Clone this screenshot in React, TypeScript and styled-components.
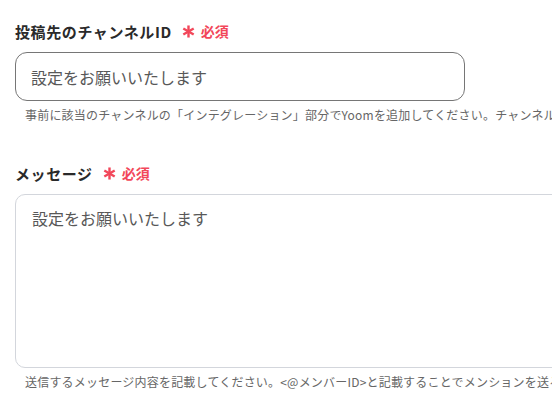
import styled, { createGlobalStyle } from "styled-components";

const GlobalStyle = createGlobalStyle`
  html, body {
    margin: 0;
    padding: 0;
    background: #ffffff;
    overflow: hidden;
  }
  body {
    font-family: "Noto Sans CJK JP", "Noto Sans", sans-serif;
    color: #2b2b2b;
  }
`;

const Page = styled.div`
  display: flex;
  flex-direction: column;
  gap: 38px;
  padding: 20px 0 0 15px;
  width: 700px;
`;

const Field = styled.div`
  display: flex;
  flex-direction: column;
`;

const LabelRow = styled.div`
  display: flex;
  align-items: center;
  height: 22px;
  margin-bottom: 10px;
`;

const Label = styled.span`
  font-size: 15px;
  font-weight: 700;
  color: #2a2a2a;
  letter-spacing: 0.6px;
`;

const Required = styled.span`
  display: flex;
  align-items: center;
  gap: 6px;
  margin-left: 10px;
  color: #f2475a;
  font-size: 14px;
  font-weight: 700;
`;

const TextInput = styled.input`
  box-sizing: border-box;
  width: 450px;
  height: 49px;
  padding: 0 15px;
  border: 1px solid #767676;
  border-radius: 12px;
  font-family: inherit;
  font-size: 16px;
  outline: none;
  &::placeholder {
    color: #585858;
  }
`;

const TextArea = styled.textarea`
  box-sizing: border-box;
  width: 640px;
  height: 174px;
  padding: 11px 16px;
  border: 1px solid #d3d6dc;
  border-radius: 10px;
  font-family: inherit;
  font-size: 16px;
  line-height: 24px;
  resize: none;
  outline: none;
  &::placeholder {
    color: #585858;
  }
`;

const Help = styled.p`
  margin: 5px 0 0 10px;
  font-size: 12px;
  line-height: 18px;
  color: #666666;
  white-space: nowrap;
  letter-spacing: 0.2px;
`;

function Asterisk() {
  return (
    <svg width="13" height="13" viewBox="0 0 14 14">
      <g stroke="#f2475a" strokeWidth="2.6" strokeLinecap="butt">
        <line x1="7" y1="0.5" x2="7" y2="13.5" />
        <line x1="1.4" y1="3.75" x2="12.6" y2="10.25" />
        <line x1="1.4" y1="10.25" x2="12.6" y2="3.75" />
      </g>
    </svg>
  );
}

export default function App() {
  return (
    <>
      <GlobalStyle />
      <Page>
        <Field>
          <LabelRow>
            <Label>投稿先のチャンネルID</Label>
            <Required>
              <Asterisk />
              必須
            </Required>
          </LabelRow>
          <TextInput placeholder="設定をお願いいたします" />
          <Help>
            事前に該当のチャンネルの「インテグレーション」部分でYoomを追加してください。チャンネルIDはチャンネル名をクリックすると表示されます。
          </Help>
        </Field>
        <Field>
          <LabelRow>
            <Label>メッセージ</Label>
            <Required>
              <Asterisk />
              必須
            </Required>
          </LabelRow>
          <TextArea placeholder="設定をお願いいたします" />
          <Help>
            送信するメッセージ内容を記載してください。&lt;@メンバーID&gt;と記載することでメンションを送ることができます。
          </Help>
        </Field>
      </Page>
    </>
  );
}
